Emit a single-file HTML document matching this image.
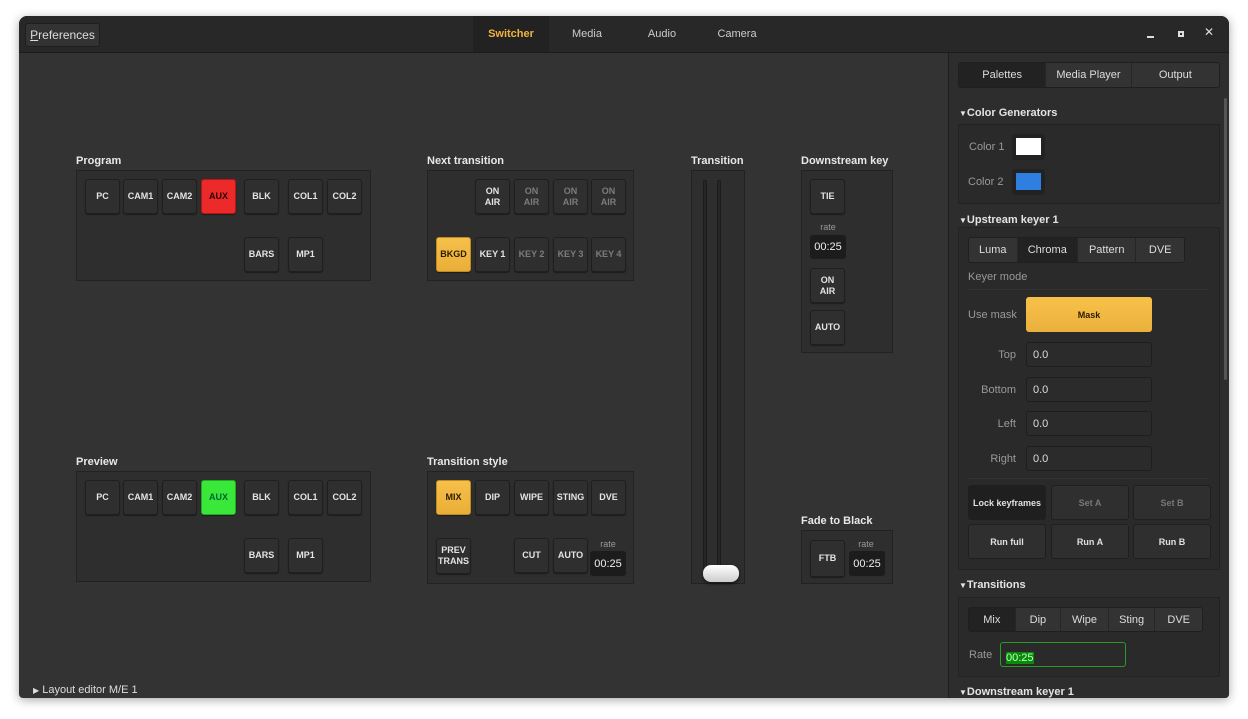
<!DOCTYPE html>
<html><head><meta charset="utf-8"><style>
*{box-sizing:border-box;margin:0;padding:0}
body{width:1248px;height:719px;background:#fff;position:relative;overflow:hidden;font-family:"Liberation Sans","DejaVu Sans",sans-serif;color:#ddd}
.win{position:absolute;left:19px;top:16px;width:1210px;height:682px;background:#333;border-radius:8px 8px 4px 4px;overflow:hidden;box-shadow:0 2px 10px rgba(0,0,0,.35)}
.hdr{position:absolute;left:0;top:0;width:1210px;height:37px;background:#282828;border-bottom:1px solid #1c1c1c}
.a{position:absolute}
.lbl{position:absolute;font-size:11px;font-weight:bold;color:#e8e8e8;margin-top:2px}
.box{position:absolute;background:#2e2e2e;border:1px solid #222}
.b{position:absolute;width:35px;height:35px;background:#2f2f2f;border:1px solid #1f1f1f;border-radius:3px;box-shadow:0 1px 1px rgba(0,0,0,.4);display:flex;align-items:center;justify-content:center;text-align:center;font-size:9px;font-weight:bold;color:#e4e4e4;line-height:11px}
.dim{color:#7c7c7c}
.red{background:#ec2a2a;color:#2a0000;border-color:#b01818}
.grn{background:#3ae83a;color:#063;border-color:#2a2}
.yel{background:linear-gradient(#f6c04a,#e9ae38);color:#2a1d00;border-color:#c08a20}
.rate{position:absolute;font-size:9px;color:#999;width:36px;text-align:center}
.tm{position:absolute;width:36px;height:25px;background:#1c1c1c;border-radius:3px;font-size:11px;color:#eee;display:flex;align-items:center;justify-content:center}
.side{position:absolute;left:929px;top:37px;width:281px;height:645px;background:#2d2d2d;border-left:1px solid #1e1e1e}
.sec{position:absolute;font-size:11px;font-weight:bold;color:#e4e4e4;margin-top:1px}
.sb{position:absolute;background:#2a2a2a;border:1px solid #222}
.tabs{position:absolute;display:flex;border:1px solid #1f1f1f;border-radius:3px;overflow:hidden;background:#333}
.tabs div{display:flex;align-items:center;justify-content:center;font-size:11px;color:#ddd;border-right:1px solid #262626}
.tabs div.on{background:#222}
.sl{position:absolute;font-size:11px;color:#999;text-align:right;margin-top:2px}
.fld{position:absolute;width:126px;height:25px;background:#2b2b2b;border:1px solid #1e1e1e;border-radius:3px;font-size:11px;color:#ddd;padding:6px 0 0 6px}
.kb{position:absolute;width:78px;height:35px;background:#2f2f2f;border:1px solid #1f1f1f;border-radius:3px;font-size:9px;font-weight:bold;color:#e0e0e0;display:flex;align-items:center;justify-content:center}
</style></head><body>
<div class="win">
 <div class="hdr">
  <div class="a" style="left:6px;top:7px;width:75px;height:24px;background:#333;border:1px solid #1e1e1e;border-radius:3px;font-size:12px;color:#ddd;text-align:center;line-height:22px"><u>P</u>references</div>
  <div class="a" style="left:454px;top:0;width:76px;height:36px;background:#222;color:#f0b43c;font-size:11px;font-weight:bold;text-align:center;line-height:36px">Switcher</div>
  <div class="a" style="left:530px;top:0;width:76px;height:36px;color:#ccc;font-size:11px;text-align:center;line-height:36px">Media</div>
  <div class="a" style="left:605px;top:0;width:76px;height:36px;color:#ccc;font-size:11px;text-align:center;line-height:36px">Audio</div>
  <div class="a" style="left:680px;top:0;width:76px;height:36px;color:#ccc;font-size:11px;text-align:center;line-height:36px">Camera</div>
  <div class="a" style="left:1128px;top:20px;width:7px;height:2px;background:#ddd"></div>
  <div class="a" style="left:1159px;top:15px;width:6px;height:6px;border:2px solid #ddd"></div>
  <div class="a" style="left:1185px;top:9px;color:#ddd;font-size:12px;font-weight:bold">✕</div>
 </div>

 <div class="lbl" style="left:57px;top:137px">Program</div>
 <div class="box" style="left:57px;top:154px;width:295px;height:111px"></div>
 <div class="b" style="left:66px;top:163px">PC</div>
 <div class="b" style="left:104px;top:163px">CAM1</div>
 <div class="b" style="left:143px;top:163px">CAM2</div>
 <div class="b red" style="left:182px;top:163px">AUX</div>
 <div class="b" style="left:225px;top:163px">BLK</div>
 <div class="b" style="left:269px;top:163px">COL1</div>
 <div class="b" style="left:308px;top:163px">COL2</div>
 <div class="b" style="left:225px;top:221px">BARS</div>
 <div class="b" style="left:269px;top:221px">MP1</div>

 <div class="lbl" style="left:57px;top:438px">Preview</div>
 <div class="box" style="left:57px;top:455px;width:295px;height:111px"></div>
 <div class="b" style="left:66px;top:464px">PC</div>
 <div class="b" style="left:104px;top:464px">CAM1</div>
 <div class="b" style="left:143px;top:464px">CAM2</div>
 <div class="b grn" style="left:182px;top:464px">AUX</div>
 <div class="b" style="left:225px;top:464px">BLK</div>
 <div class="b" style="left:269px;top:464px">COL1</div>
 <div class="b" style="left:308px;top:464px">COL2</div>
 <div class="b" style="left:225px;top:522px">BARS</div>
 <div class="b" style="left:269px;top:522px">MP1</div>

 <div class="lbl" style="left:408px;top:137px">Next transition</div>
 <div class="box" style="left:408px;top:154px;width:207px;height:111px"></div>
 <div class="b" style="left:456px;top:163px">ON<br>AIR</div>
 <div class="b dim" style="left:495px;top:163px">ON<br>AIR</div>
 <div class="b dim" style="left:534px;top:163px">ON<br>AIR</div>
 <div class="b dim" style="left:572px;top:163px">ON<br>AIR</div>
 <div class="b yel" style="left:417px;top:221px">BKGD</div>
 <div class="b" style="left:456px;top:221px">KEY 1</div>
 <div class="b dim" style="left:495px;top:221px">KEY 2</div>
 <div class="b dim" style="left:534px;top:221px">KEY 3</div>
 <div class="b dim" style="left:572px;top:221px">KEY 4</div>

 <div class="lbl" style="left:408px;top:438px">Transition style</div>
 <div class="box" style="left:408px;top:455px;width:207px;height:113px"></div>
 <div class="b yel" style="left:417px;top:464px">MIX</div>
 <div class="b" style="left:456px;top:464px">DIP</div>
 <div class="b" style="left:495px;top:464px">WIPE</div>
 <div class="b" style="left:534px;top:464px">STING</div>
 <div class="b" style="left:572px;top:464px">DVE</div>
 <div class="b" style="left:417px;top:522px;height:36px">PREV<br>TRANS</div>
 <div class="b" style="left:495px;top:522px">CUT</div>
 <div class="b" style="left:534px;top:522px">AUTO</div>
 <div class="rate" style="left:571px;top:523px">rate</div>
 <div class="tm" style="left:571px;top:535px">00:25</div>

 <div class="lbl" style="left:672px;top:137px">Transition</div>
 <div class="box" style="left:672px;top:154px;width:54px;height:414px"></div>
 <div class="a" style="left:684px;top:164px;width:4px;height:395px;background:#262626;border:1px solid #1c1c1c;border-radius:2px"></div>
 <div class="a" style="left:698px;top:164px;width:4px;height:395px;background:#262626;border:1px solid #1c1c1c;border-radius:2px"></div>
 <div class="a" style="left:684px;top:549px;width:36px;height:17px;background:linear-gradient(#fff,#ccc);border-radius:8px;box-shadow:0 2px 3px rgba(0,0,0,.5)"></div>

 <div class="lbl" style="left:782px;top:137px">Downstream key</div>
 <div class="box" style="left:782px;top:154px;width:92px;height:183px"></div>
 <div class="b" style="left:791px;top:163px">TIE</div>
 <div class="rate" style="left:791px;top:206px">rate</div>
 <div class="tm" style="left:791px;top:219px;height:24px">00:25</div>
 <div class="b" style="left:791px;top:252px">ON<br>AIR</div>
 <div class="b" style="left:791px;top:294px">AUTO</div>

 <div class="lbl" style="left:782px;top:497px">Fade to Black</div>
 <div class="box" style="left:782px;top:514px;width:92px;height:54px"></div>
 <div class="b" style="left:791px;top:524px;height:37px">FTB</div>
 <div class="rate" style="left:829px;top:523px">rate</div>
 <div class="tm" style="left:830px;top:535px">00:25</div>

 <div class="a" style="left:14px;top:668px;font-size:11px;color:#ddd"><span style="font-size:8px">▶</span> Layout editor M/E 1</div>

 <div class="side">
  <div class="tabs" style="left:9px;top:9px;width:262px;height:26px">
   <div class="on" style="width:88px">Palettes</div><div style="width:86px">Media Player</div><div style="width:88px;border-right:0">Output</div>
  </div>
  <div class="a" style="left:275px;top:45px;width:3px;height:282px;background:#555;border-radius:2px"></div>
  <div class="sec" style="left:10px;top:53px"><span style="font-size:8px">▼</span>Color Generators</div>
  <div class="sb" style="left:9px;top:71px;width:262px;height:80px"></div>
  <div class="sl" style="left:20px;top:86px">Color 1</div>
  <div class="a" style="left:63px;top:81px;width:33px;height:26px;background:#222;border-radius:3px;padding:4px"><div style="width:25px;height:17px;background:#fff"></div></div>
  <div class="sl" style="left:19px;top:121px">Color 2</div>
  <div class="a" style="left:63px;top:116px;width:33px;height:26px;background:#222;border-radius:3px;padding:4px"><div style="width:25px;height:17px;background:#2f7fe0"></div></div>

  <div class="sec" style="left:10px;top:160px"><span style="font-size:8px">▼</span>Upstream keyer 1</div>
  <div class="sb" style="left:9px;top:174px;width:262px;height:343px"></div>
  <div class="tabs" style="left:19px;top:184px;width:217px;height:26px">
   <div style="width:49px">Luma</div><div class="on" style="width:61px">Chroma</div><div style="width:59px">Pattern</div><div style="width:48px;border-right:0">DVE</div>
  </div>
  <div class="sl" style="left:19px;top:216px">Keyer mode</div>
  <div class="a" style="left:19px;top:236px;width:240px;height:1px;background:#333"></div>
  <div class="sl" style="left:19px;top:254px">Use mask</div>
  <div class="a" style="left:77px;top:244px;width:126px;height:35px;background:linear-gradient(#f8c24a,#eab03c);border-radius:3px;font-size:9px;font-weight:bold;color:#2a1d00;display:flex;align-items:center;justify-content:center">Mask</div>
  <div class="sl" style="left:19px;top:294px;width:48px">Top</div><div class="fld" style="left:77px;top:289px">0.0</div>
  <div class="sl" style="left:19px;top:329px;width:48px">Bottom</div><div class="fld" style="left:77px;top:324px">0.0</div>
  <div class="sl" style="left:19px;top:363px;width:48px">Left</div><div class="fld" style="left:77px;top:358px">0.0</div>
  <div class="sl" style="left:19px;top:398px;width:48px">Right</div><div class="fld" style="left:77px;top:393px">0.0</div>
  <div class="a" style="left:19px;top:425px;width:240px;height:1px;background:#333"></div>
  <div class="kb" style="left:19px;top:432px;background:#1f1f1f">Lock keyframes</div>
  <div class="kb" style="left:102px;top:432px;color:#777">Set A</div>
  <div class="kb" style="left:184px;top:432px;color:#777">Set B</div>
  <div class="kb" style="left:19px;top:471px">Run full</div>
  <div class="kb" style="left:102px;top:471px">Run A</div>
  <div class="kb" style="left:184px;top:471px">Run B</div>

  <div class="sec" style="left:10px;top:525px"><span style="font-size:8px">▼</span>Transitions</div>
  <div class="sb" style="left:9px;top:544px;width:262px;height:80px"></div>
  <div class="tabs" style="left:19px;top:554px;width:235px;height:25px">
   <div class="on" style="width:47px">Mix</div><div style="width:46px">Dip</div><div style="width:48px">Wipe</div><div style="width:47px">Sting</div><div style="width:47px;border-right:0">DVE</div>
  </div>
  <div class="sl" style="left:20px;top:594px">Rate</div>
  <div class="a" style="left:51px;top:589px;width:126px;height:25px;border:1px solid #2a9a2a;border-radius:3px;background:#2a2a2a;padding:5px 0 0 5px"><span style="background:#0a8a0a;color:#bfffbf;font-size:11px">00:25</span></div>
  <div class="sec" style="left:10px;top:632px"><span style="font-size:8px">▼</span>Downstream keyer 1</div>
 </div>
</div>
</body></html>
